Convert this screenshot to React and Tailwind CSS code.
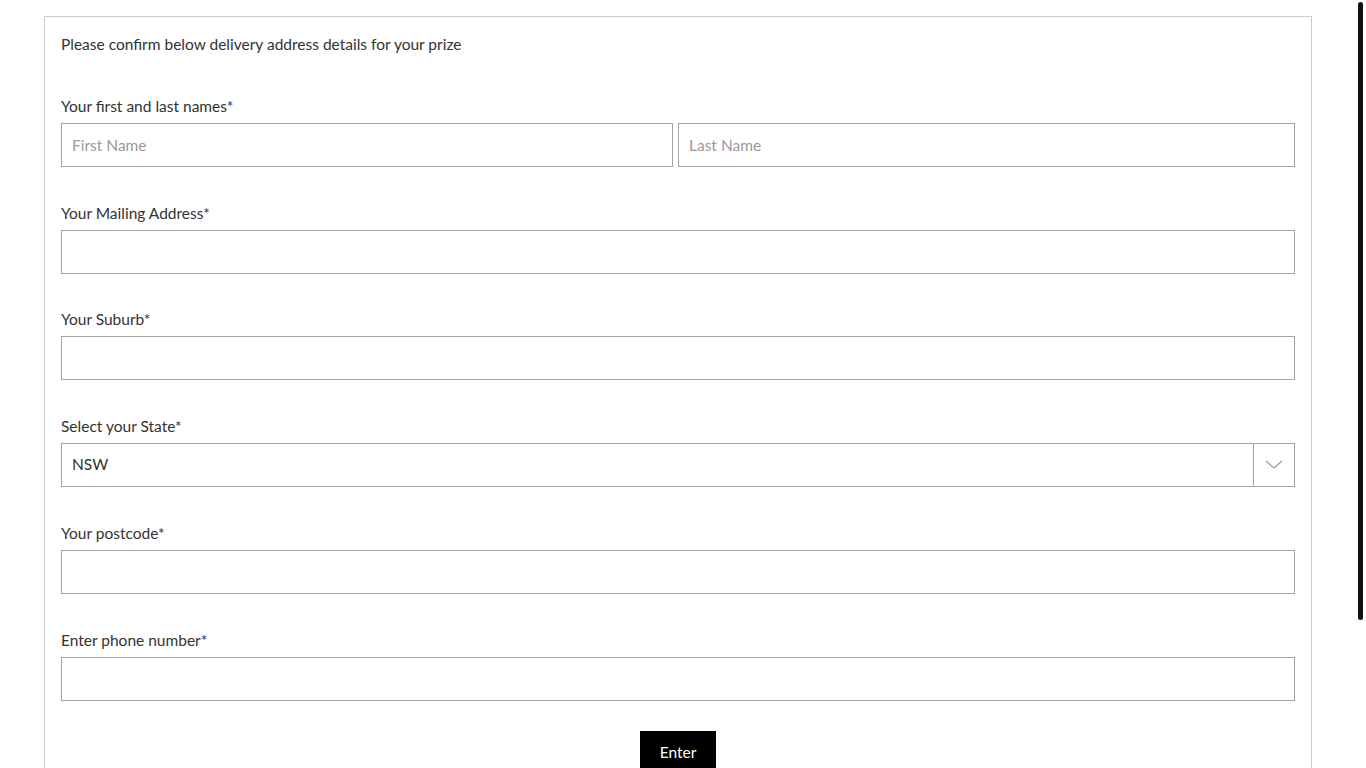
import React from "react";

const font = { fontFamily: '"Source Sans Pro", Lato, "Liberation Sans", sans-serif' };

function Field({ label, children, gap = "mt-[34px]" }) {
  return (
    <div className={gap}>
      <label className="block text-[15.5px] leading-[24px] text-[#333]">{label}</label>
      <div className="mt-[5px]">{children}</div>
    </div>
  );
}

function Input({ placeholder }) {
  return (
    <input
      placeholder={placeholder}
      className="block h-[44px] w-full border border-[#a3a3a3] bg-white px-[10px] text-[15.5px] text-[#333] placeholder:text-[#999] outline-none"
      style={font}
    />
  );
}

export default function App() {
  return (
    <div className="relative min-h-[768px] bg-white pt-4" style={font}>
      <div className="ml-[44px] w-[1268px] border border-[#cccccc] px-4 pt-[15px] pb-10">
        <p className="text-[15.5px] leading-[24px] text-[#333]">Please confirm below delivery address details for your prize</p>
        <div className="mt-[38px]">
          <Field label="Your first and last names*" gap="mt-0">
            <div className="grid grid-cols-[612px_1fr] gap-[5px]">
              <Input placeholder="First Name" />
              <Input placeholder="Last Name" />
            </div>
          </Field>
          <Field label="Your Mailing Address*">
            <Input />
          </Field>
          <Field label="Your Suburb*" gap="mt-[33px]">
            <Input />
          </Field>
          <Field label="Select your State*">
            <div className="flex h-[44px] border border-[#a3a3a3]">
              <div className="flex flex-1 items-center px-[10px] text-[15.5px] text-[#333]">NSW</div>
              <div className="flex w-[41px] items-center justify-center border-l border-[#a3a3a3]">
                <svg width="18" height="10" viewBox="0 0 18 10" fill="none">
                  <path d="M1 1l8 7 8-7" stroke="#9a9a9a" strokeWidth="1.2" />
                </svg>
              </div>
            </div>
          </Field>
          <Field label="Your postcode*">
            <Input />
          </Field>
          <Field label="Enter phone number*">
            <Input />
          </Field>
        </div>
        <div className="mt-[30px] flex justify-center">
          <button className="h-[44px] w-[76px] bg-black text-[15.5px] text-white" style={font}>Enter</button>
        </div>
      </div>
      <div className="absolute right-[3px] top-[2px] h-[618px] w-[5px] rounded-sm bg-[#111]" />
    </div>
  );
}
